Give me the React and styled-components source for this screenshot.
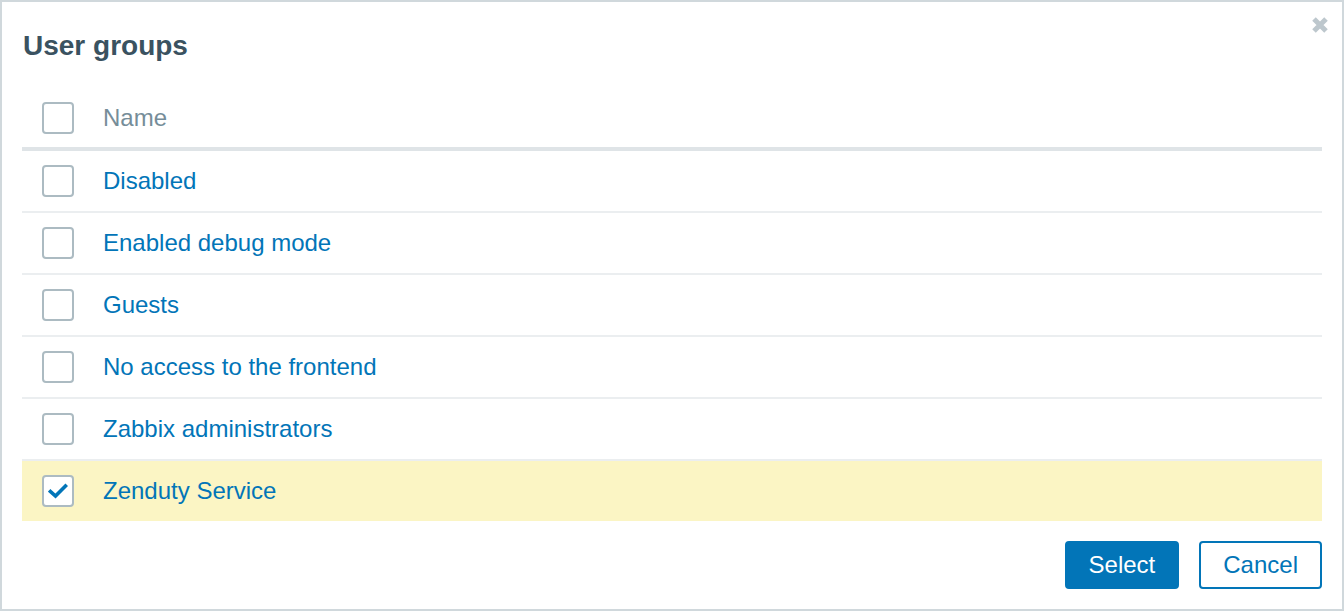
import React, { useState } from "react";
import styled, { createGlobalStyle } from "styled-components";

const GlobalStyle = createGlobalStyle`
  html, body {
    margin: 0;
    padding: 0;
    background: #ffffff;
  }
  body {
    font-family: "Liberation Sans", Arial, Helvetica, sans-serif;
  }
`;

const groups = [
  { id: 1, name: "Disabled" },
  { id: 2, name: "Enabled debug mode" },
  { id: 3, name: "Guests" },
  { id: 4, name: "No access to the frontend" },
  { id: 5, name: "Zabbix administrators" },
  { id: 6, name: "Zenduty Service" },
];

const CheckBox = ({ checked, onClick }) => (
  <Box onClick={onClick}>
    {checked && (
      <svg width="20" height="16" viewBox="0 0 20 16">
        <path
          d="M2.5 8.5 L7.5 13 L17.5 3"
          fill="none"
          stroke="#0275b8"
          strokeWidth="3.6"
          strokeLinecap="square"
        />
      </svg>
    )}
  </Box>
);

const App = () => {
  const [selected, setSelected] = useState([6]);

  const toggle = (id) => {
    setSelected((pre) =>
      pre.includes(id) ? pre.filter((s) => s !== id) : [...pre, id]
    );
  };

  const allChecked = selected.length === groups.length;

  return (
    <>
      <GlobalStyle />
      <Dialog>
        <CloseBtn aria-label="Close">
          <svg width="18" height="18" viewBox="0 0 18 18">
            <path
              d="M3 3 L15 15 M15 3 L3 15"
              stroke="#bdc7cd"
              strokeWidth="5"
              strokeLinecap="butt"
            />
          </svg>
        </CloseBtn>
        <Title>User groups</Title>
        <Table>
          <HeaderRow>
            <CheckCell>
              <CheckBox
                checked={allChecked}
                onClick={() =>
                  setSelected(allChecked ? [] : groups.map((g) => g.id))
                }
              />
            </CheckCell>
            <HeaderName>Name</HeaderName>
          </HeaderRow>
          {groups.map((group, i) => (
            <Row
              key={group.id}
              $selected={selected.includes(group.id)}
              $last={i === groups.length - 1}
            >
              <CheckCell>
                <CheckBox
                  checked={selected.includes(group.id)}
                  onClick={() => toggle(group.id)}
                />
              </CheckCell>
              <NameLink href="#" onClick={(e) => e.preventDefault()}>
                {group.name}
              </NameLink>
            </Row>
          ))}
        </Table>
        <Footer>
          <Button $primary>Select</Button>
          <Button>Cancel</Button>
        </Footer>
      </Dialog>
    </>
  );
};

export default App;

const Dialog = styled.div`
  position: relative;
  box-sizing: border-box;
  width: 1344px;
  height: 611px;
  border: 2px solid #d0d8dc;
  padding: 30px 20px 20px 20px;
  display: flex;
  flex-direction: column;
  background: #ffffff;
`;

const CloseBtn = styled.button`
  position: absolute;
  top: 14px;
  right: 13px;
  width: 18px;
  height: 18px;
  padding: 0;
  border: none;
  background: none;
  cursor: pointer;
  display: flex;
`;

const Title = styled.h4`
  margin: 0 0 37px 1px;
  font-size: 28px;
  line-height: 28px;
  font-weight: bold;
  color: #3a5260;
`;

const Table = styled.div`
  display: flex;
  flex-direction: column;
`;

const HeaderRow = styled.div`
  box-sizing: border-box;
  display: flex;
  align-items: center;
  height: 54px;
  padding-bottom: 8px;
  border-bottom: 4px solid #dfe4e7;
`;

const Row = styled.div`
  display: flex;
  align-items: center;
  height: 60px;
  border-bottom: ${(p) => (p.$last ? "none" : "2px solid #ebeef0")};
  background: ${(p) => (p.$selected ? "#fbf5c4" : "transparent")};
`;

const CheckCell = styled.div`
  width: 81px;
  padding-left: 20px;
  box-sizing: border-box;
  display: flex;
  align-items: center;
`;

const Box = styled.span`
  box-sizing: border-box;
  width: 32px;
  height: 32px;
  border: 2px solid #acbbc2;
  border-radius: 4px;
  background: #ffffff;
  display: flex;
  align-items: center;
  justify-content: center;
  cursor: pointer;
`;

const HeaderName = styled.span`
  font-size: 24px;
  color: #768d99;
`;

const NameLink = styled.a`
  font-size: 24px;
  color: #0275b8;
  text-decoration: none;
`;

const Footer = styled.div`
  margin-top: 20px;
  display: flex;
  justify-content: flex-end;
  gap: 20px;
`;

const Button = styled.button`
  box-sizing: border-box;
  height: 48px;
  padding: 0 22px;
  border: 2px solid #0275b8;
  border-radius: 4px;
  font-family: "Liberation Sans", Arial, sans-serif;
  font-size: 24px;
  background: ${(p) => (p.$primary ? "#0275b8" : "#ffffff")};
  color: ${(p) => (p.$primary ? "#ffffff" : "#0275b8")};
  cursor: pointer;
`;
